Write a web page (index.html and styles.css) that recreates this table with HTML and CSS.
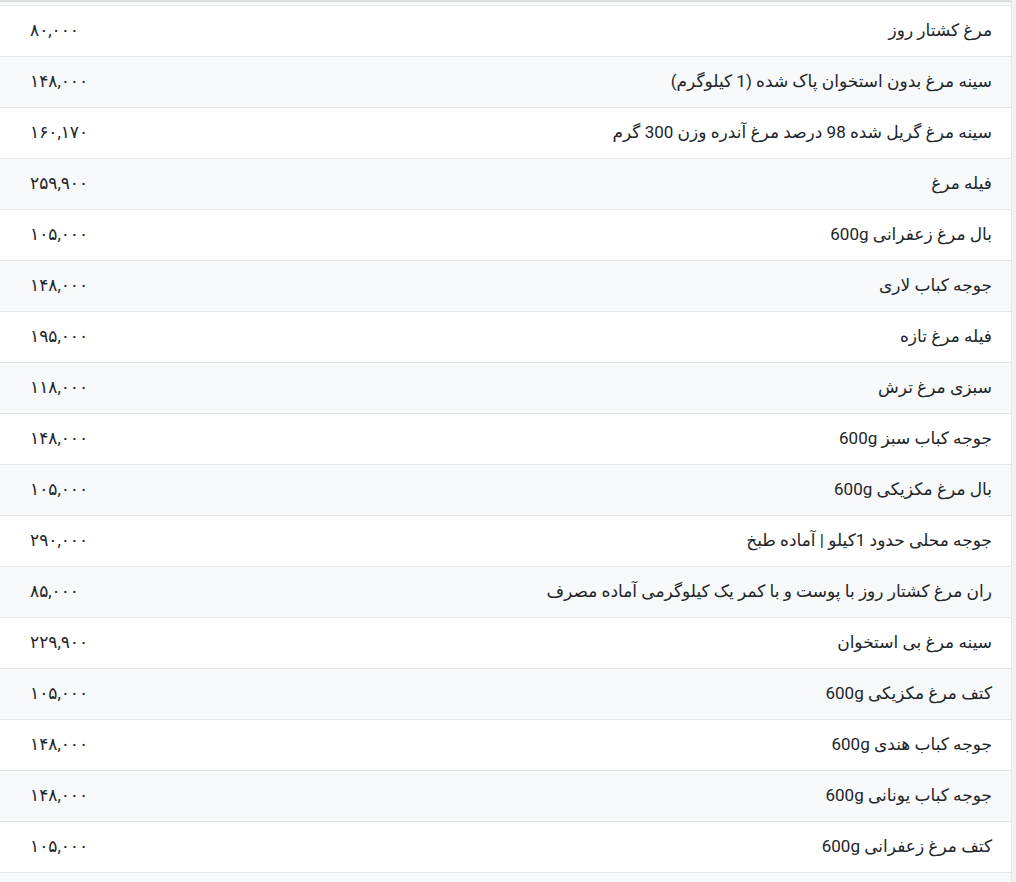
FILE: index.html
```html
<!DOCTYPE html>
<html lang="fa" dir="rtl">
<head>
<meta charset="utf-8">
<title>قیمت مرغ</title>
<link rel="stylesheet" href="styles.css">
</head>
<body>
<div class="wrap">
  <div class="head-edge"></div>
  <table class="prices">
    <tbody>
      <tr><td class="name">مرغ کشتار روز</td><td class="price">۸۰,۰۰۰</td></tr>
      <tr><td class="name">سینه مرغ بدون استخوان پاک شده (1 کیلوگرم)</td><td class="price">۱۴۸,۰۰۰</td></tr>
      <tr><td class="name">سینه مرغ گریل شده 98 درصد مرغ آندره وزن 300 گرم</td><td class="price">۱۶۰,۱۷۰</td></tr>
      <tr><td class="name">فیله مرغ</td><td class="price">۲۵۹,۹۰۰</td></tr>
      <tr><td class="name">بال مرغ زعفرانی 600g</td><td class="price">۱۰۵,۰۰۰</td></tr>
      <tr><td class="name">جوجه کباب لاری</td><td class="price">۱۴۸,۰۰۰</td></tr>
      <tr><td class="name">فیله مرغ تازه</td><td class="price">۱۹۵,۰۰۰</td></tr>
      <tr><td class="name">سبزی مرغ ترش</td><td class="price">۱۱۸,۰۰۰</td></tr>
      <tr><td class="name">جوجه کباب سبز 600g</td><td class="price">۱۴۸,۰۰۰</td></tr>
      <tr><td class="name">بال مرغ مکزیکی 600g</td><td class="price">۱۰۵,۰۰۰</td></tr>
      <tr><td class="name">جوجه محلی حدود 1کیلو | آماده طبخ</td><td class="price">۲۹۰,۰۰۰</td></tr>
      <tr><td class="name">ران مرغ کشتار روز با پوست و با کمر یک کیلوگرمی آماده مصرف</td><td class="price">۸۵,۰۰۰</td></tr>
      <tr><td class="name">سینه مرغ بی استخوان</td><td class="price">۲۲۹,۹۰۰</td></tr>
      <tr><td class="name">کتف مرغ مکزیکی 600g</td><td class="price">۱۰۵,۰۰۰</td></tr>
      <tr><td class="name">جوجه کباب هندی 600g</td><td class="price">۱۴۸,۰۰۰</td></tr>
      <tr><td class="name">جوجه کباب یونانی 600g</td><td class="price">۱۴۸,۰۰۰</td></tr>
      <tr><td class="name">کتف مرغ زعفرانی 600g</td><td class="price">۱۰۵,۰۰۰</td></tr>
      <tr><td class="name">&nbsp;</td><td class="price">&nbsp;</td></tr>
    </tbody>
  </table>
</div>
</body>
</html>
```
FILE: styles.css
```css
html, body {
  margin: 0;
  padding: 0;
  background: #f1f2f3;
}
body {
  font-family: Roboto, "DejaVu Sans", sans-serif;
  color: #212529;
  overflow: hidden;
}
.wrap {
  width: 1011px;
  margin-left: 0;
  margin-right: auto;
  background: #ffffff;
  border-right: 1px solid #e6e7e8;
  border-top: 2px solid #dcdee0;
}
.head-edge {
  height: 3px;
  background: #f8f9fa;
}
.prices {
  width: 100%;
  border-collapse: collapse;
}
.prices tr {
  height: 51px;
}
.prices td {
  border-top: 1px solid #e4e6e8;
  font-size: 17px;
  line-height: 24px;
  padding: 0 0 3px 0;
  vertical-align: middle;
}
.prices tr:nth-child(even) td {
  background: #f8f9fa;
}
.name {
  text-align: right;
  padding-right: 19px !important;
}
.price {
  text-align: left;
  padding-left: 30px !important;
  width: 200px;
}
```
